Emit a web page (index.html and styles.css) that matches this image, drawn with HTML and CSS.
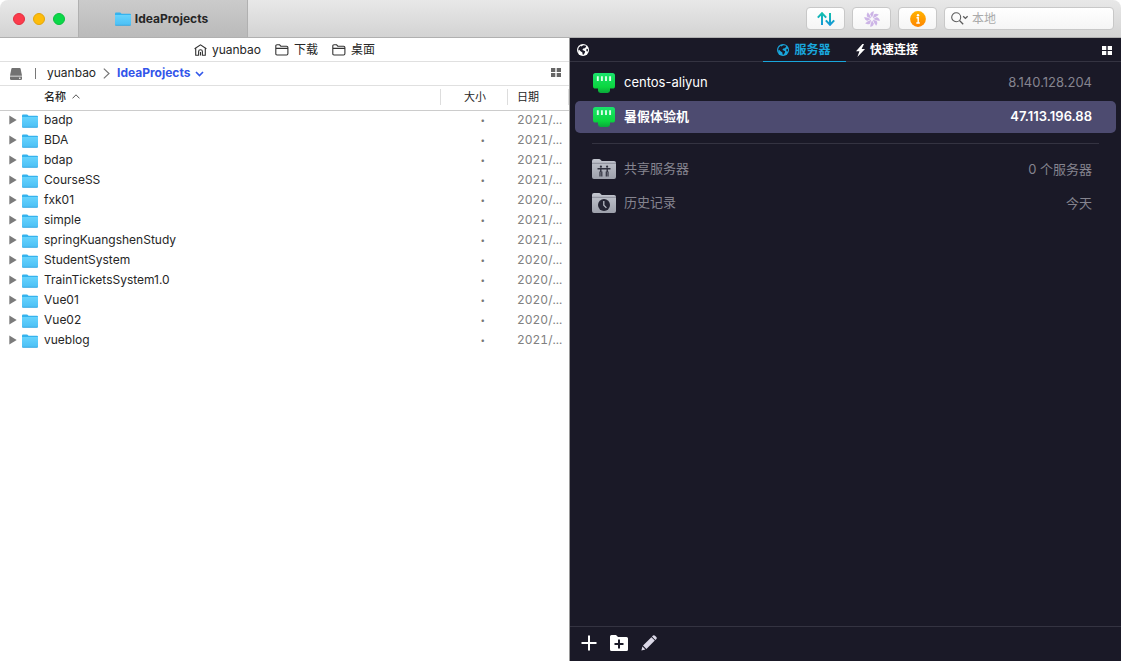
FILE: index.html
```html
<!DOCTYPE html>
<html lang="zh-CN">
<head>
<meta charset="utf-8">
<title>IdeaProjects</title>
<link rel="stylesheet" href="styles.css">
</head>
<body>
<svg class="sprite" aria-hidden="true">
  <defs>
    <linearGradient id="g-folder" x1="0" y1="0" x2="0" y2="1"><stop offset="0" stop-color="#66d3fd"/><stop offset="1" stop-color="#4bbff5"/></linearGradient>
    <linearGradient id="g-arrows" gradientUnits="userSpaceOnUse" x1="0" y1="0" x2="0" y2="14"><stop offset="0" stop-color="#12c4a8"/><stop offset="1" stop-color="#1493dc"/></linearGradient>
    <linearGradient id="g-info" x1="0" y1="0" x2="0" y2="1"><stop offset="0" stop-color="#ffb300"/><stop offset="1" stop-color="#ff8500"/></linearGradient>
    <linearGradient id="g-server" x1="0" y1="0" x2="0" y2="1"><stop offset="0" stop-color="#1ae36c"/><stop offset=".7" stop-color="#0bd63f"/><stop offset="1" stop-color="#0aa83a"/></linearGradient>
    <linearGradient id="g-grey" x1="0" y1="0" x2="0" y2="1"><stop offset="0" stop-color="#c3c6cf"/><stop offset="1" stop-color="#9da0ab"/></linearGradient>
  </defs>
  <symbol id="folder" viewBox="0 0 16 14">
    <path d="M0 1.8Q0 .6 1 .6H5.2L6.6 1.8H15Q16 1.8 16 2.8V13H0Z" fill="#35b3ee"/>
    <path d="M0 3H16V12.6Q16 13.4 15 13.4H1Q0 13.4 0 12.6Z" fill="url(#g-folder)"/>
    <path d="M.3 13.3H15.7" stroke="#35a2dc" stroke-width=".8"/>
  </symbol>
  <symbol id="tri" viewBox="0 0 8 10"><path d="M.3.5 7.7 5 .3 9.5Z" fill="#7b7b7b"/></symbol>
  <symbol id="folder-line" viewBox="0 0 14 12"><path d="M.8 9.8V2Q.8.8 2 .8H4.6L5.8 2.2H11.6Q12.9 2.2 12.9 3.5V9.6Q12.9 11 11.6 11H2Q.8 11 .8 9.8ZM.8 4.4H12.9" fill="none" stroke="#333" stroke-width="1.1"/></symbol>
  <symbol id="globe" viewBox="0 0 12 12"><circle cx="6" cy="6" r="6" fill="currentColor"/><path d="M6.2 1.2 8.6 1.6 9.2 2.8 7.8 4.2 6.2 4.6 5.4 6 6.6 6.4 8.2 7.2 7.8 8.8 6.6 10.8 5.6 10.6 5.4 8.6 3.6 7.2 1.8 5.4 1.2 7.4 1.8 8.6 1 6 1.8 3.6 3.8 1.8 4.4 2.6ZM9.6 4.8 10.9 4.9 10.9 7.2 9.9 7.6 9.2 6.2Z" fill="#1a1927"/></symbol>
  <symbol id="server" viewBox="0 0 22 21"><path d="M2.5 0H19.5Q22 0 22 2.5V13Q22 15.6 19.5 15.6H17V17.6Q17 20 14.5 20H7.5Q5 20 5 17.6V15.6H2.5Q0 15.6 0 13V2.5Q0 0 2.5 0Z" fill="url(#g-server)"/><path d="M4.8 3.3V8M8.9 3.3V8M13 3.3V8M17.1 3.3V8" stroke="#dcffe8" stroke-width="1.9"/></symbol>
  <symbol id="grey-folder" viewBox="0 0 24 20"><path d="M0 2Q0 0 2 0H7Q8 0 9 1.2L9.8 2H22Q24 2 24 4V18Q24 20 22 20H2Q0 20 0 18Z" fill="url(#g-grey)"/><path d="M0 4.3H24" stroke="#858894" stroke-width=".9"/></symbol>
  <symbol id="tiles" viewBox="0 0 10 9"><path d="M0 0H4.3V4H0ZM5.7 0H10V4H5.7ZM0 5H4.3V9H0ZM5.7 5H10V9H5.7Z" fill="currentColor"/></symbol>
</svg>

<div class="window">
  <header class="titlebar">
    <div class="lights">
      <button class="light red" aria-label="关闭"></button>
      <button class="light yellow" aria-label="最小化"></button>
      <button class="light green" aria-label="缩放"></button>
    </div>
    <button class="window-tab"><svg class="ic16"><use href="#folder"/></svg>IdeaProjects</button>
    <div class="tools">
      <button class="tool" aria-label="传输"><svg width="18" height="14" viewBox="0 0 18 14"><path d="M5 13V1.4M.8 5.6 5 1.2 9.2 5.6M13 1V12.6M8.8 8.4 13 12.8 17.2 8.4" fill="none" stroke="url(#g-arrows)" stroke-width="2"/></svg></button>
      <button class="tool" aria-label="活动"><svg width="16" height="16" viewBox="0 0 16 16"><g fill="#ccb4e6"><path id="petal" d="M8 6.8 6.2 3.6Q6.3.8 9.9.2L9.2 3.6Z"/><use href="#petal" transform="rotate(45 8 8)"/><use href="#petal" transform="rotate(90 8 8)"/><use href="#petal" transform="rotate(135 8 8)"/><use href="#petal" transform="rotate(180 8 8)"/><use href="#petal" transform="rotate(225 8 8)"/><use href="#petal" transform="rotate(270 8 8)"/><use href="#petal" transform="rotate(315 8 8)"/></g></svg></button>
      <button class="tool" aria-label="信息"><svg width="16" height="16" viewBox="0 0 16 16"><circle cx="8" cy="8" r="7.9" fill="url(#g-info)"/><circle cx="8" cy="4.2" r="1.2" fill="#fff"/><path d="M6.5 6.8H8.2V12M6.3 12H9.8" fill="none" stroke="#fff" stroke-width="1.4"/></svg></button>
      <label class="search">
        <svg width="18" height="13" viewBox="0 0 18 13"><circle cx="5.2" cy="5.2" r="4.5" fill="none" stroke="#5c5c5c" stroke-width="1.1"/><path d="M8.5 8.5 12.2 12.2M12.2 4.2 14.4 6.4 16.6 4.2" fill="none" stroke="#5c5c5c" stroke-width="1.3"/></svg>
        <input type="text" placeholder="本地" aria-label="搜索">
      </label>
    </div>
  </header>

  <div class="panes">
    <section class="local">
      <nav class="favorites">
        <a href="#"><svg width="13" height="12" viewBox="0 0 13 12"><path d="M.6 4.8 6.5.8 12.4 4.8M1.7 4.3V11.3H4.6V7.5Q4.6 5.7 6.5 5.7T8.4 7.5V11.3H11.3V4.3M6.5 11.5V8" fill="none" stroke="#333" stroke-width="1.1"/></svg>yuanbao</a>
        <a href="#"><svg width="14" height="12"><use href="#folder-line"/></svg>下载</a>
        <a href="#"><svg width="14" height="12"><use href="#folder-line"/></svg>桌面</a>
      </nav>
      <nav class="path">
        <svg width="12" height="12" viewBox="0 0 12 12"><path d="M2.3 0H9.7Q10.5 0 10.7 1L12 7.7H0L1.3 1Q1.5 0 2.3 0Z" fill="#727272"/><path d="M0 8.6H12V10.8Q12 12 10.8 12H1.2Q0 12 0 10.8Z" fill="#727272"/><circle cx="9.8" cy="10.3" r=".8" fill="#fff"/></svg>
        <span class="bar"></span>
        <a href="#">yuanbao</a>
        <svg width="7" height="11" viewBox="0 0 7 11"><path d="M.8.6 6 5.5.8 10.4" fill="none" stroke="#777" stroke-width="1.2"/></svg>
        <a href="#" class="current">IdeaProjects<svg width="9" height="6" viewBox="0 0 9 6"><path d="M1 1 4.5 4.6 8 1" fill="none" stroke="#3358ea" stroke-width="1.6"/></svg></a>
        <button class="view" aria-label="视图"><svg width="10" height="9"><use href="#tiles"/></svg></button>
      </nav>
      <table class="files">
        <thead><tr>
          <th class="name">名称<svg width="8" height="5" viewBox="0 0 8 5"><path d="M.5 4.4 4 .8 7.5 4.4" fill="none" stroke="#555"/></svg></th>
          <th class="size"><span>大小</span></th>
          <th class="date"><span>日期</span></th>
        </tr></thead>
        <tbody>
          <tr><td><div class="entry"><svg class="tri"><use href="#tri"/></svg><svg class="ic16"><use href="#folder"/></svg>badp</div></td><td class="size">•</td><td class="date">2021/...</td></tr>
          <tr><td><div class="entry"><svg class="tri"><use href="#tri"/></svg><svg class="ic16"><use href="#folder"/></svg>BDA</div></td><td class="size">•</td><td class="date">2021/...</td></tr>
          <tr><td><div class="entry"><svg class="tri"><use href="#tri"/></svg><svg class="ic16"><use href="#folder"/></svg>bdap</div></td><td class="size">•</td><td class="date">2021/...</td></tr>
          <tr><td><div class="entry"><svg class="tri"><use href="#tri"/></svg><svg class="ic16"><use href="#folder"/></svg>CourseSS</div></td><td class="size">•</td><td class="date">2021/...</td></tr>
          <tr><td><div class="entry"><svg class="tri"><use href="#tri"/></svg><svg class="ic16"><use href="#folder"/></svg>fxk01</div></td><td class="size">•</td><td class="date">2020/...</td></tr>
          <tr><td><div class="entry"><svg class="tri"><use href="#tri"/></svg><svg class="ic16"><use href="#folder"/></svg>simple</div></td><td class="size">•</td><td class="date">2021/...</td></tr>
          <tr><td><div class="entry"><svg class="tri"><use href="#tri"/></svg><svg class="ic16"><use href="#folder"/></svg>springKuangshenStudy</div></td><td class="size">•</td><td class="date">2021/...</td></tr>
          <tr><td><div class="entry"><svg class="tri"><use href="#tri"/></svg><svg class="ic16"><use href="#folder"/></svg>StudentSystem</div></td><td class="size">•</td><td class="date">2020/...</td></tr>
          <tr><td><div class="entry"><svg class="tri"><use href="#tri"/></svg><svg class="ic16"><use href="#folder"/></svg>TrainTicketsSystem1.0</div></td><td class="size">•</td><td class="date">2020/...</td></tr>
          <tr><td><div class="entry"><svg class="tri"><use href="#tri"/></svg><svg class="ic16"><use href="#folder"/></svg>Vue01</div></td><td class="size">•</td><td class="date">2020/...</td></tr>
          <tr><td><div class="entry"><svg class="tri"><use href="#tri"/></svg><svg class="ic16"><use href="#folder"/></svg>Vue02</div></td><td class="size">•</td><td class="date">2020/...</td></tr>
          <tr><td><div class="entry"><svg class="tri"><use href="#tri"/></svg><svg class="ic16"><use href="#folder"/></svg>vueblog</div></td><td class="size">•</td><td class="date">2021/...</td></tr>
        </tbody>
      </table>
    </section>

    <section class="remote">
      <nav class="tabs">
        <button class="edge" aria-label="服务器列表"><svg width="12" height="12"><use href="#globe"/></svg></button>
        <button class="tab active"><svg width="12" height="12"><use href="#globe"/></svg>服务器</button>
        <button class="tab"><svg width="9" height="13" viewBox="0 0 9 13"><path d="M6.4 0 0 7.3H3.4L1.4 13 9 5H5.6L8 0Z" fill="#fff"/></svg>快速连接</button>
        <button class="edge right" aria-label="视图"><svg width="10" height="9"><use href="#tiles"/></svg></button>
      </nav>
      <ul class="servers">
        <li class="row"><svg width="24" height="21"><use href="#server"/></svg><span class="label">centos-aliyun</span><span class="value">8.140.128.204</span></li>
        <li class="row selected"><svg width="24" height="21"><use href="#server"/></svg><span class="label">暑假体验机</span><span class="value">47.113.196.88</span></li>
      </ul>
      <hr>
      <ul class="servers dim">
        <li class="row"><svg width="24" height="20" viewBox="0 0 24 20"><use href="#grey-folder" width="24" height="20"/><g fill="none" stroke="#30313f" stroke-width="1.4"><path d="M5.5 9.8H18.5M8.8 9.5V13M15.2 9.5V13"/><path d="M8 12.5V17.5M9.8 12.5V17.5M14.3 12.5V17.5M16 12.5V17.5" stroke-width="1.2"/></g><circle cx="8.9" cy="7.7" r="1.1" fill="#30313f"/><circle cx="15.1" cy="7.7" r="1.1" fill="#30313f"/></svg><span class="label">共享服务器</span><span class="value">0 个服务器</span></li>
        <li class="row"><svg width="24" height="20" viewBox="0 0 24 20"><use href="#grey-folder" width="24" height="20"/><circle cx="12" cy="12" r="6" fill="#242433"/><path d="M11.8 8V12.3L14.4 14.9" fill="none" stroke="#b5b8c2" stroke-width="1.3"/></svg><span class="label">历史记录</span><span class="value">今天</span></li>
      </ul>
      <footer class="actions">
        <button aria-label="添加"><svg width="16" height="16" viewBox="0 0 16 16"><path d="M8 .5V15.5M.5 8H15.5" stroke="#fff" stroke-width="2"/></svg></button>
        <button aria-label="新建文件夹"><svg width="18" height="16" viewBox="0 0 18 16"><path d="M0 1.5Q0 0 1.5 0H6L8 2H16.5Q18 2 18 3.5V14.5Q18 16 16.5 16H1.5Q0 16 0 14.5Z" fill="#fff"/><path d="M9 4.5V13.5M4.5 9H13.5" stroke="#1a1927" stroke-width="2"/></svg></button>
        <button aria-label="编辑"><svg width="16" height="16" viewBox="0 0 16 16"><path d="M.4 15.6 1.4 11.6 4.4 14.6ZM2 10.6 10.4 2.2 13.8 5.6 5.4 14ZM11 1.6 12 .6Q13-.2 14 .7L15.3 2Q16.2 3 15.4 4L14.4 5Z" fill="#dcd9e8"/></svg></button>
      </footer>
    </section>
  </div>
</div>
</body>
</html>
```
FILE: styles.css
```css
* { box-sizing: border-box; }
body { margin: 0; background: #fff; color: #262626; font: 12px/16px Inter, "Noto Sans CJK SC", sans-serif; }
button { margin: 0; padding: 0; border: 0; background: none; font: inherit; color: inherit; }
a { color: inherit; text-decoration: none; }
svg { flex: none; }
.sprite { position: absolute; width: 0; height: 0; }
.ic16 { width: 16px; height: 14px; }

.window { display: flex; flex-direction: column; min-height: 100vh; border-radius: 8px 8px 0 0; overflow: hidden; }
.titlebar { display: flex; height: 38px; background: linear-gradient(#e8e8e8, #d3d3d3); border-bottom: 1px solid #b0b0b0; }
.lights { display: flex; align-items: center; gap: 8px; width: 78px; padding-left: 13px; }
.light { width: 12px; height: 12px; border-radius: 50%; }
.red { background: #fc3b4c; border: 1px solid #e13040; }
.yellow { background: #fdbc0a; border: 1px solid #e2a60a; }
.green { background: #0bd848; border: 1px solid #0abf3e; }
.window-tab { display: flex; align-items: center; justify-content: center; gap: 4px; width: 170px; padding-right: 3px; background: linear-gradient(#cbcbcb, #bababa); border: solid #b0b0b0; border-width: 0 1px; font-weight: 700; }
.tools { display: flex; align-items: center; gap: 7px; margin-left: auto; padding-right: 7px; }
.tool { display: flex; align-items: center; justify-content: center; width: 39px; height: 23px; }
.tool, .search { background: linear-gradient(#fff, #f5f5f5); border: 1px solid #c8c8c8; border-radius: 4px; }
.search { display: flex; align-items: center; gap: 3px; width: 170px; height: 23px; padding-left: 6px; }
.search input { flex: 1; min-width: 0; padding: 0; border: 0; outline: 0; background: none; font: inherit; }
.search input::placeholder { color: #aaa; }

.panes { display: grid; grid-template-columns: 570fr 551fr; flex: 1; }
.local { min-width: 0; border-right: 1px solid #9a9a9a; background: #fff; }
.favorites, .path { display: flex; align-items: center; height: 24px; border-bottom: 1px solid #e0e0e0; }
.favorites { justify-content: center; gap: 14px; }
.favorites a { display: flex; align-items: center; gap: 5px; }
.path { padding: 0 8px 0 10px; }
.path a { padding-bottom: 2px; }
.bar { width: 1px; height: 11px; margin: 0 11px 0 13px; background: #777; }
.path a + svg { margin: 0 7px; }
.current { display: flex; align-items: center; gap: 5px; color: #3355ea; font-weight: 700; }
.current svg { margin-top: 2px; }
.view { display: flex; margin-left: auto; padding-bottom: 2px; color: #666; }

.files { width: 100%; table-layout: fixed; border-collapse: collapse; }
.files th { height: 24px; padding: 0 0 1px; border-bottom: 1px solid #ccc; font-size: 11px; font-weight: 400; text-align: left; }
.files th.name { padding-left: 44px; font-weight: 500; }
.name svg { margin-left: 6px; vertical-align: 2px; }
.files th.size { width: 67px; }
.files th.date { width: 62px; }
.files th span { display: block; border-left: 1px solid #ddd; }
.files th.size span { padding-left: 23px; }
.files th.date span { padding-left: 9px; border-right: 1px solid #ddd; }
.files td { height: 20px; padding: 0 0 2px; line-height: 18px; }
.files td:first-child { padding: 0; }
.entry { display: flex; align-items: flex-start; height: 20px; padding-left: 9px; }
.tri { width: 8px; height: 10px; margin: 4px 5px 0 0; }
.entry .ic16 { margin: 3px 6px 0 0; }
.files td.size { padding-right: 22px; color: #777; font-size: 8px; text-align: right; }
.files td.date { padding-left: 10px; color: #808080; font-variant-numeric: tabular-nums; }

.remote { display: flex; flex-direction: column; min-width: 0; background: #1a1927; color: #fff; font-size: 13px; }
.tabs { display: grid; grid-template-columns: 1fr 83px 83px 1fr; height: 24px; border-bottom: 1px solid #343341; font-size: 12px; }
.edge { display: flex; align-items: center; padding: 0 9px 0 7px; }
.right { justify-content: flex-end; }
.tab { display: flex; align-items: center; justify-content: center; gap: 5px; height: 24px; font-weight: 700; white-space: nowrap; }
.active { color: #19a6dc; border-bottom: 1px solid #19a6dc; }
.servers { margin: 0; padding: 0 5px; list-style: none; }
.tabs + .servers { padding-top: 5px; }
.row { display: flex; align-items: center; height: 32px; margin-bottom: 2px; padding: 0 24px 0 17px; border-radius: 5px; }
.label, .value { padding-bottom: 2px; }
.label { margin-left: 8px; }
.value { margin-left: auto; color: #85848f; }
.selected { background: #4d4b70; }
.selected .label, .selected .value { color: #fff; font-weight: 600; }
hr { height: 1px; margin: 8px 22px 9px; border: 0; background: #343341; align-self: stretch; }
.dim { color: #85848f; }
.dim .value { padding-bottom: 1px; }
.actions { display: flex; align-items: center; gap: 13px; height: 35px; margin-top: auto; padding: 0 0 2px 11px; border-top: 1px solid #343341; }
.actions button { display: flex; }
```
